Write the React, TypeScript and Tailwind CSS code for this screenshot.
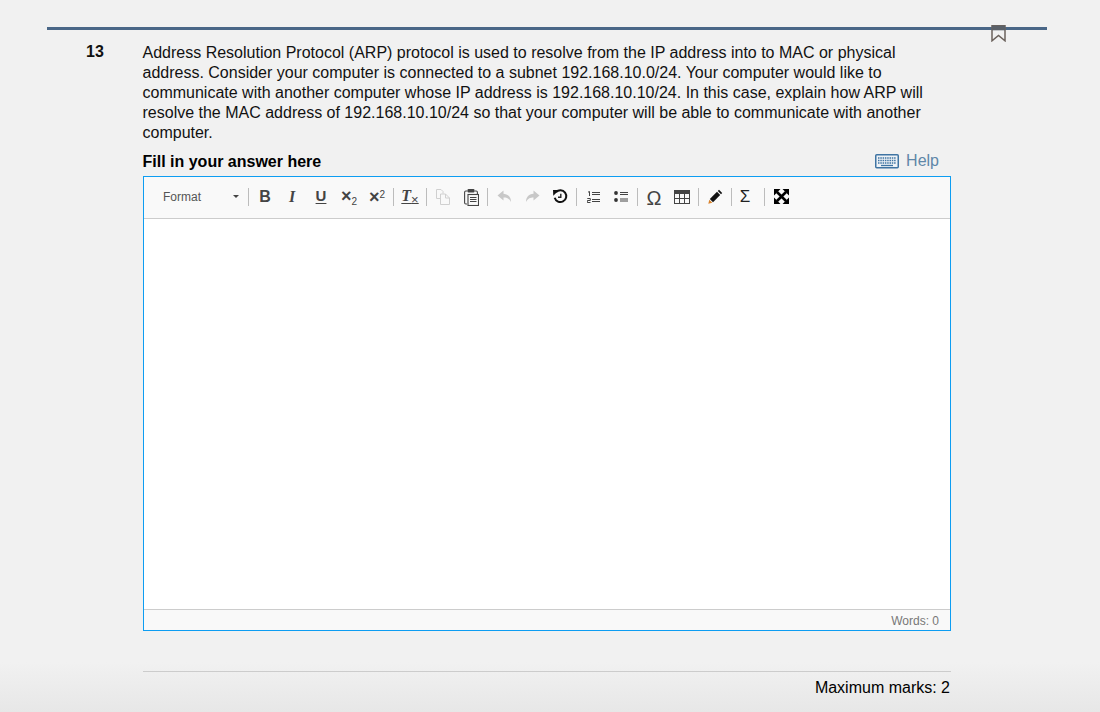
import type { ReactNode } from "react";

const sans = "font-['Liberation_Sans',Arial,sans-serif]";

function Sep() {
  return <div className="w-px h-[18px] bg-[#bcbcbc] ml-[2px] mr-[2px] shrink-0" />;
}

function Btn({ w = 28, children }: { w?: number; children: ReactNode }) {
  return (
    <div className="h-[24px] flex items-center justify-center shrink-0" style={{ width: w }}>
      {children}
    </div>
  );
}

function CopyIcon() {
  return (
    <svg width="14" height="16" viewBox="0 0 14 16" fill="none" stroke="#d0d0d0" strokeWidth="1">
      <path d="M4.500 9.500H.5V.5H5l2 2v2" />
      <path d="M4.500 5H9.500l4 4v6.500h-9z" />
      <path d="M9.500 5v4h4" />
    </svg>
  );
}

function PasteIcon() {
  return (
    <svg width="15" height="18" viewBox="0 0 15 18" fill="none" stroke="#444" strokeWidth="1.100">
      <path d="M3.500 3H1.800a1.200 1.200 0 0 0-1.200 1.200v10.600A1.200 1.200 0 0 0 1.800 16H3" />
      <path d="M10.500 3h1.700a1.200 1.200 0 0 1 1.200 1.200V6" />
      <rect x="3.500" y="1" width="7" height="3.500" rx="1" fill="#444" stroke="none" />
      <rect x="4" y="6.500" width="10.500" height="11" fill="#f9f9f9" />
      <path d="M6 9.500h6.500M6 11.500h6.500M6 13.500h6.500" strokeWidth="1.200" />
    </svg>
  );
}

function UndoIcon({ flip = false }: { flip?: boolean }) {
  return (
    <svg width="15" height="13" viewBox="0 0 15 13" fill="#c8c8c8" className={flip ? "-scale-x-100" : ""}>
      <path d="M6.500.5.500 5.500l6 5V7.500c3.200 0 5.500.8 7.500 4.500 0-4.700-2.500-7.700-7.500-8.200z" />
    </svg>
  );
}

function HistoryIcon() {
  return (
    <svg width="15" height="15" viewBox="0 0 15 15" fill="none" stroke="#111" strokeWidth="2">
      <path d="M3 3.200A5.900 5.900 0 1 1 1.700 8.800" />
      <path d="M0 1h6.200L.3 6.800z" fill="#111" stroke="none" />
      <path d="M7.800 4.800v3.400H5" strokeWidth="1.400" stroke="#222" />
    </svg>
  );
}

function OlIcon() {
  return (
    <svg width="13" height="12" viewBox="0 0 13 12" fill="none" stroke="#444" strokeWidth="1">
      <path d="M5 1.500h8M5 3.500h8M5 8.500h8M5 10.500h8" />
      <path d="M1 1.200 2.500.5v4.500" />
      <path d="M.3 7.500h3v2h-3v2h3.200" />
    </svg>
  );
}

function UlIcon() {
  return (
    <svg width="14" height="11" viewBox="0 0 14 11" fill="none" stroke="#444">
      <circle cx="2" cy="2" r="1.900" fill="#333" stroke="none" />
      <circle cx="2" cy="9" r="1.900" fill="#333" stroke="none" />
      <path d="M6 1.500h8M6 3.500h8M6 8h8M6 10h8" strokeWidth="1" />
    </svg>
  );
}

function TableIcon() {
  return (
    <svg width="16" height="14" viewBox="0 0 16 14" fill="none" stroke="#444" strokeWidth="1">
      <rect x="0.500" y="0.500" width="15" height="13" />
      <rect x="0" y="0" width="16" height="4" fill="#444" stroke="none" />
      <path d="M5.500 4v9.500M10.500 4v9.500M0 8.500h16" />
    </svg>
  );
}

function PencilIcon() {
  return (
    <svg width="15" height="15" viewBox="0 0 15 15">
      <path d="M11 .8 14.200 4 13 5.200 9.800 2z" fill="#111" />
      <path d="M9 2.800 12.200 6 5 13.200 1.800 10z" fill="#111" />
      <path d="M1.300 10.700 4.300 13.700 .3 14.700z" fill="#d9822b" />
    </svg>
  );
}

function MaximizeIcon() {
  return (
    <svg width="15" height="15" viewBox="0 0 15 15" fill="#000" stroke="none">
      <path d="M0 0h6.500L0 6.500zM15 0v6.500L8.500 0zM0 15V8.500L6.500 15zM15 15H8.500L15 8.500z" />
      <path d="M3 3l9 9M12 3l-9 9" stroke="#000" strokeWidth="2.600" fill="none" />
    </svg>
  );
}

function KeyboardIcon() {
  return (
    <svg width="24" height="15" viewBox="0 0 24 15" fill="none" stroke="#3f74a3">
      <rect x="0.750" y="0.750" width="22.500" height="13" rx="1" strokeWidth="1.500" fill="#eef2f6" />
      <path d="M3 4h18M3 6.500h18M3 9h18" strokeWidth="1.300" strokeDasharray="1.500 .8" />
      <path d="M6 11.500h12" strokeWidth="1.300" />
    </svg>
  );
}

function BookmarkIcon() {
  return (
    <svg width="15" height="17" viewBox="0 0 15 17" fill="none" stroke="#6b625c" strokeWidth="1.500" className="absolute top-[-2px] left-[944px]">
      <path d="M1 .8h13v15l-6.500-5.300L1 15.800z" />
      <rect x="1" y="0.800" width="13" height="4.500" fill="#5a6068" stroke="none" />
    </svg>
  );
}

export default function App() {
  return (
    <div className={`relative min-h-[712px] h-[712px] overflow-hidden bg-[#f1f1f1] text-[#111] ${sans}`}>
      <div className="absolute inset-x-0 bottom-0 h-[50px] bg-gradient-to-b from-[#f1f1f1] to-[#e7e7e7]" />
      <div className="relative pt-[27px] pl-[47px] w-[1047px]">
        <div className="relative h-[3px] bg-[#4a6787]">
          <BookmarkIcon />
        </div>
        <div className="flex pt-[13px]">
          <div className="w-[96px] pl-[39px] shrink-0 text-[16px] leading-[18px] font-bold">13</div>
          <div className="w-[808px] shrink-0">
            <p className="text-[16px] leading-[20px] pr-[20px] -ml-[0.5px]">
              Address Resolution Protocol (ARP) protocol is used to resolve from the IP address into to MAC or physical
              address. Consider your computer is connected to a subnet 192.168.10.0/24. Your computer would like to
              communicate with another computer whose IP address is 192.168.10.10/24. In this case, explain how ARP will
              resolve the MAC address of 192.168.10.10/24 so that your computer will be able to communicate with another
              computer.
            </p>
            <div className="flex items-center justify-between h-[24px] mt-[6px] pr-[12px] -ml-[0.5px]">
              <span className="text-[16px] font-bold text-black mt-[2px]">Fill in your answer here</span>
              <span className="flex items-center gap-[7px] text-[16px] text-[#5f87a8]">
                <KeyboardIcon />
                Help
              </span>
            </div>
            <div className="mt-[3px] h-[455px] border border-[#0d9df2] bg-white flex flex-col">
              <div className="h-[42px] bg-[#f9f9f9] border-b border-[#cccccc] flex items-center pl-[19px] pb-[2px] shrink-0">
                <div className="w-[83px] flex items-center justify-between text-[12px] text-[#555] pr-[7px] shrink-0">
                  Format
                  <span className="w-0 h-0 border-x-[3px] border-x-transparent border-t-[3px] border-t-[#444]" />
                </div>
                <Sep />
                <Btn><span className="text-[16px] font-bold text-[#444]">B</span></Btn>
                <Btn><span className="text-[16px] font-bold italic text-[#444] font-['Liberation_Serif',serif] pr-[2px]">I</span></Btn>
                <Btn><span className="text-[15px] font-bold text-[#444] underline underline-offset-2">U</span></Btn>
                <Btn><span className="text-[18px] font-bold text-[#444] leading-none">×<span className="text-[10px] font-normal align-[-3px]">2</span></span></Btn>
                <Btn><span className="text-[18px] font-bold text-[#444] leading-none">×<span className="text-[10px] font-normal align-[5px]">2</span></span></Btn>
                <Sep />
                <Btn><span className="text-[16px] font-bold italic text-[#444] underline underline-offset-2 font-['Liberation_Serif',serif]">T<span className="text-[13px] not-italic font-normal align-[-3px] font-['Liberation_Sans',sans-serif]">×</span></span></Btn>
                <Sep />
                <Btn><CopyIcon /></Btn>
                <Btn><PasteIcon /></Btn>
                <Sep />
                <Btn><UndoIcon /></Btn>
                <Btn><UndoIcon flip /></Btn>
                <Btn><HistoryIcon /></Btn>
                <Sep />
                <Btn><OlIcon /></Btn>
                <Btn><UlIcon /></Btn>
                <Sep />
                <Btn><span className="text-[20px] font-medium text-[#444] leading-none mt-[2px]">Ω</span></Btn>
                <Btn><TableIcon /></Btn>
                <Sep />
                <Btn><PencilIcon /></Btn>
                <Sep />
                <Btn><span className="text-[17px] text-[#222] pr-[6px]">Σ</span></Btn>
                <Sep />
                <Btn><MaximizeIcon /></Btn>
              </div>
              <div className="flex-1" />
              <div className="h-[21px] bg-[#f9f9f9] border-t border-[#cccccc] flex items-center justify-end pr-[11px] pt-px text-[12px] text-[#777] shrink-0">
                Words: 0
              </div>
            </div>
            <div className="mt-[40px] border-t border-[#cccccc] pt-[6px] pr-[1px] text-right text-[16px] leading-[20px] text-black">
              Maximum marks: 2
            </div>
          </div>
        </div>
      </div>
    </div>
  );
}
